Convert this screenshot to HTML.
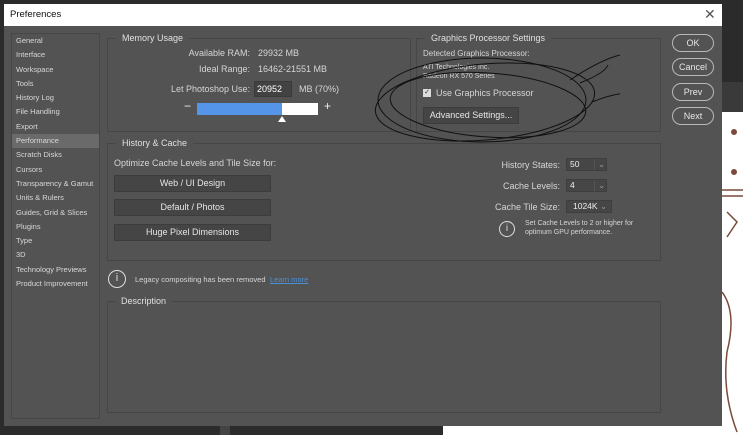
<!DOCTYPE html>
<html><head><style>
*{margin:0;padding:0;box-sizing:border-box}
body{width:743px;height:435px;overflow:hidden;background:#2b2b2b;font-family:"Liberation Sans",sans-serif;font-size:8.5px;color:#d6d6d6;position:relative}
.a{position:absolute;white-space:nowrap}
.grp{position:absolute;border:1px solid #464646}
.gt{position:absolute;background:#535353;padding:0 6px;font-size:9px;color:#e0e0e0}
.btn{position:absolute;background:#454545;border:1px solid #3c3c3c;text-align:center;color:#e6e6e6;font-size:9px}
.pill{position:absolute;left:672px;width:42px;height:18px;border:1px solid #b8b8b8;border-radius:9px;text-align:center;line-height:16px;color:#e6e6e6;font-size:9px}
.r{text-align:right}
.sel{position:absolute;height:13px;background:#464646;border:1px solid #3e3e3e;color:#eee;font-size:8.5px;line-height:11px;padding-left:3px}
.side div{height:14.3px;line-height:14.3px;padding-left:4px;font-size:7.5px;color:#d8d8d8}
</style></head><body>
<!-- canvas bits -->
<div class="a" style="left:722px;top:112px;width:21px;height:323px;background:#fff"></div>
<div class="a" style="left:722px;top:82px;width:21px;height:30px;background:#3a3a3a"></div>
<div class="a" style="left:443px;top:426px;width:300px;height:9px;background:#fff"></div>
<div class="a" style="left:220px;top:426px;width:10px;height:9px;background:#444"></div>
<svg class="a" style="left:722px;top:112px" width="21" height="323"><g fill="#7a4a3a"><circle cx="12" cy="20" r="3"/><circle cx="12" cy="60" r="3"/></g><g stroke="#7a4a3a" fill="none" stroke-width="1.5"><path d="M0 78h21M0 84h21M5 100l10 10l-10 15M0 180q15 20 5 60q-5 40 10 80"/></g></svg>
<!-- dialog -->
<div class="a" style="left:4px;top:4px;width:718px;height:422px;background:#535353"></div>
<div class="a" style="left:4px;top:4px;width:718px;height:22px;background:#fff;color:#111;font-size:9.5px;line-height:22px;padding-left:6px">Preferences</div>
<div class="a" style="left:704px;top:6px;color:#555;font-size:14px">✕</div>
<div class="a side" style="left:11px;top:33px;width:89px;height:386px;border:1px solid #474747">
<div>General</div><div>Interface</div><div>Workspace</div><div>Tools</div><div>History Log</div><div>File Handling</div><div>Export</div><div style="background:#6a6a6a">Performance</div><div>Scratch Disks</div><div>Cursors</div><div>Transparency &amp; Gamut</div><div>Units &amp; Rulers</div><div>Guides, Grid &amp; Slices</div><div>Plugins</div><div>Type</div><div>3D</div><div>Technology Previews</div><div>Product Improvement</div>
</div>
<!-- memory -->
<div class="grp" style="left:107px;top:38px;width:304px;height:94px"></div>
<div class="gt" style="left:116px;top:33px">Memory Usage</div>
<div class="a r" style="left:150px;top:48px;width:100px;font-size:9px">Available RAM:</div>
<div class="a" style="left:258px;top:48px;font-size:9px">29932 MB</div>
<div class="a r" style="left:150px;top:64px;width:100px;font-size:9px">Ideal Range:</div>
<div class="a" style="left:258px;top:64px;font-size:9px">16462-21551 MB</div>
<div class="a r" style="left:150px;top:84px;width:100px;font-size:9px">Let Photoshop Use:</div>
<div class="a" style="left:254px;top:81px;width:38px;height:16px;background:#424242;border:1px solid #3a3a3a;color:#fff;font-size:9px;line-height:14px;padding-left:2px">20952</div>
<div class="a" style="left:299px;top:84px;font-size:9px">MB (70%)</div>
<div class="a" style="left:184px;top:99px;font-size:12px;color:#eee">−</div>
<div class="a" style="left:197px;top:103px;width:85px;height:12px;background:#5595e9"></div>
<div class="a" style="left:282px;top:103px;width:36px;height:12px;background:#fff"></div>
<div class="a" style="left:324px;top:99px;font-size:12px;color:#eee">+</div>
<div class="a" style="left:278px;top:116px;width:0;height:0;border-left:4px solid transparent;border-right:4px solid transparent;border-bottom:6px solid #fff"></div>
<!-- graphics -->
<div class="grp" style="left:416px;top:38px;width:245px;height:94px"></div>
<div class="gt" style="left:425px;top:33px">Graphics Processor Settings</div>
<div class="a" style="left:423px;top:49px;font-size:8px">Detected Graphics Processor:</div>
<div class="a" style="left:423px;top:64px;font-size:7px">ATI Technologies Inc.</div>
<div class="a" style="left:423px;top:73px;font-size:7px">Radeon RX 570 Series</div>
<div class="a" style="left:423px;top:89px;width:8px;height:8px;background:#ddd;color:#333;font-size:7px;line-height:8px;text-align:center">✓</div>
<div class="a" style="left:436px;top:88px;font-size:9px">Use Graphics Processor</div>
<div class="btn" style="left:423px;top:107px;width:96px;height:17px;line-height:15px">Advanced Settings...</div>
<!-- buttons -->
<div class="pill" style="top:34px">OK</div>
<div class="pill" style="top:58px">Cancel</div>
<div class="pill" style="top:83px">Prev</div>
<div class="pill" style="top:107px">Next</div>
<!-- history -->
<div class="grp" style="left:107px;top:143px;width:554px;height:118px"></div>
<div class="gt" style="left:116px;top:138px">History &amp; Cache</div>
<div class="a" style="left:114px;top:158px;font-size:9px">Optimize Cache Levels and Tile Size for:</div>
<div class="btn" style="left:114px;top:175px;width:157px;height:17px;line-height:15px">Web / UI Design</div>
<div class="btn" style="left:114px;top:199px;width:157px;height:17px;line-height:15px">Default / Photos</div>
<div class="btn" style="left:114px;top:224px;width:157px;height:17px;line-height:15px">Huge Pixel Dimensions</div>
<div class="a r" style="left:480px;top:160px;width:80px;font-size:9px">History States:</div>
<div class="sel" style="left:566px;top:158px;width:41px">50<span style="position:absolute;left:27px;top:0;border-left:1px solid #555;padding-left:3px;color:#999">⌄</span></div>
<div class="a r" style="left:480px;top:181px;width:80px;font-size:9px">Cache Levels:</div>
<div class="sel" style="left:566px;top:179px;width:41px">4<span style="position:absolute;left:27px;top:0;border-left:1px solid #555;padding-left:3px;color:#999">⌄</span></div>
<div class="a r" style="left:480px;top:202px;width:80px;font-size:9px">Cache Tile Size:</div>
<div class="sel" style="left:566px;top:200px;width:46px;padding-left:6px">1024K <span style="color:#999">⌄</span></div>
<div class="a" style="left:499px;top:221px;width:16px;height:16px;border:1.5px solid #ddd;border-radius:50%;text-align:center;line-height:13px;font-size:10px;color:#ddd">i</div>
<div class="a" style="left:525px;top:220px;font-size:7px;line-height:8.5px">Set Cache Levels to 2 or higher for<br>optimum GPU performance.</div>
<!-- info -->
<div class="a" style="left:108px;top:270px;width:18px;height:18px;border:1.5px solid #ddd;border-radius:50%;text-align:center;line-height:15px;font-size:11px;color:#ddd">i</div>
<div class="a" style="left:135px;top:275px;font-size:7.5px">Legacy compositing has been removed</div>
<div class="a" style="left:270px;top:275px;font-size:7.5px;color:#4a90d9;text-decoration:underline">Learn more</div>
<!-- description -->
<div class="grp" style="left:107px;top:301px;width:554px;height:112px"></div>
<div class="gt" style="left:115px;top:296px">Description</div>
<!-- scribble -->
<svg class="a" style="left:370px;top:50px" width="250" height="110" fill="none" stroke="#111" stroke-width="1"><ellipse cx="115" cy="52" rx="110" ry="38" transform="rotate(-5 115 52)"/><ellipse cx="118" cy="55" rx="98" ry="32" transform="rotate(4 118 55)"/><ellipse cx="112" cy="50" rx="104" ry="42"/><path d="M200 30q30-20 50-25M210 33q25-10 28-18M222 52q20-8 35-9"/></svg>
</body></html>
